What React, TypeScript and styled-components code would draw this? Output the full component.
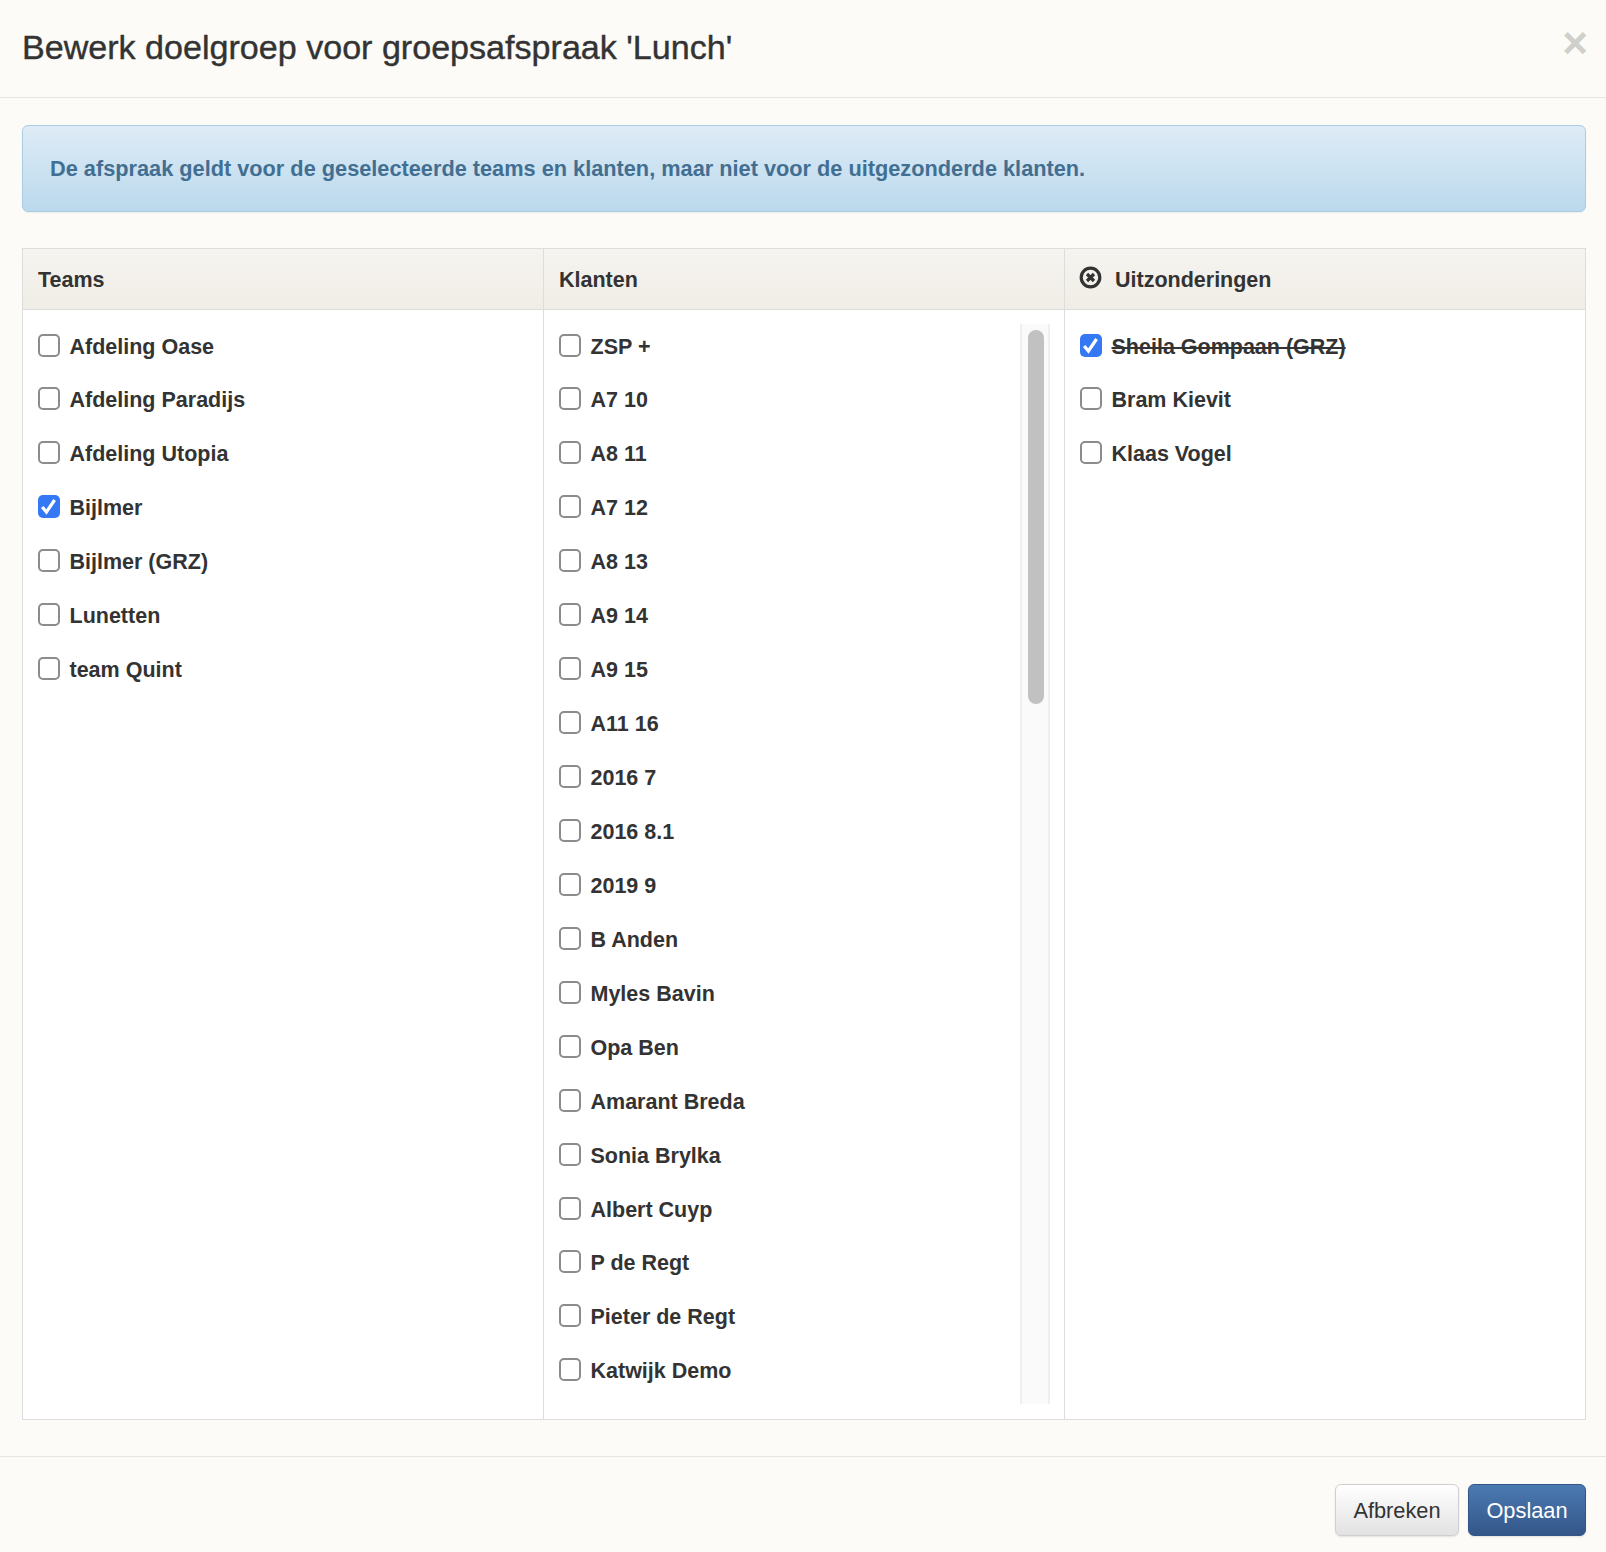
import styled, { createGlobalStyle } from 'styled-components';

const teams = [
  { name: 'Afdeling Oase' },
  { name: 'Afdeling Paradijs' },
  { name: 'Afdeling Utopia' },
  { name: 'Bijlmer', checked: true },
  { name: 'Bijlmer (GRZ)' },
  { name: 'Lunetten' },
  { name: 'team Quint' },
];

const clients = [
  'ZSP +', 'A7 10', 'A8 11', 'A7 12', 'A8 13', 'A9 14', 'A9 15', 'A11 16', '2016 7', '2016 8.1',
  '2019 9', 'B Anden', 'Myles Bavin', 'Opa Ben', 'Amarant Breda', 'Sonia Brylka', 'Albert Cuyp',
  'P de Regt', 'Pieter de Regt', 'Katwijk Demo',
];

const exceptions = [
  { name: 'Sheila Gompaan (GRZ)', checked: true },
  { name: 'Bram Kievit' },
  { name: 'Klaas Vogel' },
];

type RowProps = { name: string; checked?: boolean; struck?: boolean };

function CheckRow({ name, checked, struck }: RowProps) {
  return (
    <Row>
      <Box $checked={checked}>
        {checked && (
          <svg width='19' height='19' viewBox='0 0 19 19'>
            <path d='M3.2 10 L7.4 15 L15.6 3' fill='none' stroke='#fff' strokeWidth='3.2' />
          </svg>
        )}
      </Box>
      <RowLabel>
        <RowText $struck={struck}>{name}</RowText>
      </RowLabel>
    </Row>
  );
}

function App() {
  return (
    <>
      <GlobalStyle />
      <Modal>
        <Header>
          <Title>Bewerk doelgroep voor groepsafspraak 'Lunch'</Title>
          <Close>×</Close>
        </Header>
        <Body>
          <Alert>De afspraak geldt voor de geselecteerde teams en klanten, maar niet voor de uitgezonderde klanten.</Alert>
          <Table>
            <Column>
              <ColumnHead>Teams</ColumnHead>
              <ColumnBody>
                <List>
                  {teams.map((t) => <CheckRow key={t.name} name={t.name} checked={t.checked} />)}
                </List>
              </ColumnBody>
            </Column>
            <Column>
              <ColumnHead>Klanten</ColumnHead>
              <ColumnBody>
                <List>
                  {clients.map((c) => <CheckRow key={c} name={c} />)}
                </List>
                <ScrollTrack>
                  <ScrollThumb />
                </ScrollTrack>
              </ColumnBody>
            </Column>
            <Column>
              <ColumnHead>
                <HeadIcon width='23' height='23' viewBox='0 0 23 23'>
                  <circle cx='11.5' cy='11.5' r='9.3' fill='none' stroke='#333' strokeWidth='3.2' />
                  <path d='M8 8 L15 15 M15 8 L8 15' stroke='#333' strokeWidth='3.2' />
                </HeadIcon>
                <HeadLabel>Uitzonderingen</HeadLabel>
              </ColumnHead>
              <ColumnBody>
                <List>
                  {exceptions.map((e) => (
                    <CheckRow key={e.name} name={e.name} checked={e.checked} struck={e.checked} />
                  ))}
                </List>
              </ColumnBody>
            </Column>
          </Table>
        </Body>
        <Footer>
          <CancelButton>Afbreken</CancelButton>
          <SaveButton>Opslaan</SaveButton>
        </Footer>
      </Modal>
    </>
  );
}

const GlobalStyle = createGlobalStyle`
  html, body {
    margin: 0;
    padding: 0;
    background: #fcfbf7;
  }
  body {
    font-family: "Liberation Sans", Arial, sans-serif;
    color: #333;
  }
`;

const Modal = styled.div`
  width: 1606px;
  height: 1552px;
  display: flex;
  flex-direction: column;
  overflow: hidden;
  background: #fcfbf7;
`;

const Header = styled.div`
  height: 97px;
  flex: none;
  border-bottom: 1px solid #e6e5e1;
  padding: 0 18px 0 22px;
  display: flex;
  justify-content: space-between;
  align-items: flex-start;
`;

const Title = styled.h3`
  margin: 26px 0 0;
  font-size: 34.1px;
  line-height: 42px;
  font-weight: 400;
  color: #333;
  -webkit-text-stroke: 0.4px #333;
`;

const Close = styled.span`
  margin-top: 21px;
  font-size: 44px;
  line-height: 44px;
  font-weight: 700;
  color: #cfcfcc;
`;

const Body = styled.div`
  flex: 1;
  min-height: 0;
  padding: 27px 20px 36px 22px;
  display: flex;
  flex-direction: column;
  gap: 36px;
  border-bottom: 1px solid #e6e5e1;
`;

const Alert = styled.div`
  height: 87px;
  flex: none;
  box-sizing: border-box;
  display: flex;
  align-items: center;
  padding: 0 27px;
  border: 1px solid #a8cde6;
  border-radius: 6px;
  background: linear-gradient(#deecf6, #bbd9ed);
  box-shadow: 0 1px 2px rgba(0, 0, 0, 0.06);
  color: #426f91;
  font-size: 21.74px;
  font-weight: 700;
`;

const Table = styled.div`
  flex: 1;
  min-height: 0;
  display: grid;
  grid-template-columns: 520px 521px 1fr;
  border: 1px solid #ddd;
  background: #fff;
`;

const Column = styled.div`
  display: flex;
  flex-direction: column;
  min-height: 0;
  & + & {
    border-left: 1px solid #ddd;
  }
`;

const ColumnHead = styled.div`
  height: 61px;
  flex: none;
  box-sizing: border-box;
  padding: 2px 15px 0;
  display: flex;
  align-items: center;
  border-bottom: 1px solid #ddd;
  background: linear-gradient(#f6f4f0, #f0ede6);
  font-size: 21.5px;
  font-weight: 700;
  color: #333;
`;

const HeadIcon = styled.svg`
  flex: none;
  margin: -6px 0 0 -1px;
`;

const HeadLabel = styled.span`
  margin-left: 13px;
`;

const ColumnBody = styled.div`
  flex: 1;
  min-height: 0;
  display: flex;
  padding-top: 14px;
  padding-bottom: 15px;
`;

const List = styled.div`
  flex: 1;
  min-width: 0;
  padding-left: 14.5px;
  display: flex;
  flex-direction: column;
  gap: 7.95px;
  overflow: hidden;
`;

const Row = styled.div`
  height: 46px;
  flex: none;
  display: flex;
  align-items: center;
`;

const Box = styled.span<{ $checked?: boolean }>`
  width: 22.5px;
  height: 23px;
  flex: none;
  box-sizing: border-box;
  border-radius: 5px;
  display: flex;
  align-items: center;
  justify-content: center;
  margin-top: -4px;
  background: ${(p) => (p.$checked ? '#3478f6' : '#fff')};
  border: ${(p) => (p.$checked ? '0' : '2px solid #8c8c8c')};
`;

const RowLabel = styled.span`
  margin-left: 9.5px;
  font-size: 21.5px;
  font-weight: 700;
  color: #333;
`;

const RowText = styled.span<{ $struck?: boolean }>`
  text-decoration: ${(p) => (p.$struck ? 'line-through' : 'none')};
`;

const ScrollTrack = styled.div`
  flex: none;
  width: 30px;
  margin-right: 14px;
  box-sizing: border-box;
  padding: 6px 6px 0;
  background: #fafafa;
  border-left: 2px solid #efefef;
  border-right: 2px solid #efefef;
`;

const ScrollThumb = styled.div`
  width: 16px;
  height: 374px;
  border-radius: 8px;
  background: #c1c1c1;
`;

const Footer = styled.div`
  height: 95px;
  flex: none;
  box-sizing: border-box;
  display: flex;
  justify-content: flex-end;
  gap: 9px;
  padding: 27px 20px 0 0;
  align-items: flex-start;
`;

const Button = styled.button`
  height: 52px;
  box-sizing: border-box;
  border-radius: 6px;
  font-family: inherit;
  font-size: 21.8px;
  padding: 2px 0 0;
  box-shadow: 0 1px 2px rgba(0, 0, 0, 0.1);
`;

const CancelButton = styled(Button)`
  width: 124px;
  color: #333;
  border: 1px solid #cfcfcf;
  background: linear-gradient(#ffffff, #e2e2e2);
`;

const SaveButton = styled(Button)`
  width: 118px;
  color: #fff;
  border: 1px solid #33568a;
  background: linear-gradient(#4b7ab2, #345689);
`;

export default App;
